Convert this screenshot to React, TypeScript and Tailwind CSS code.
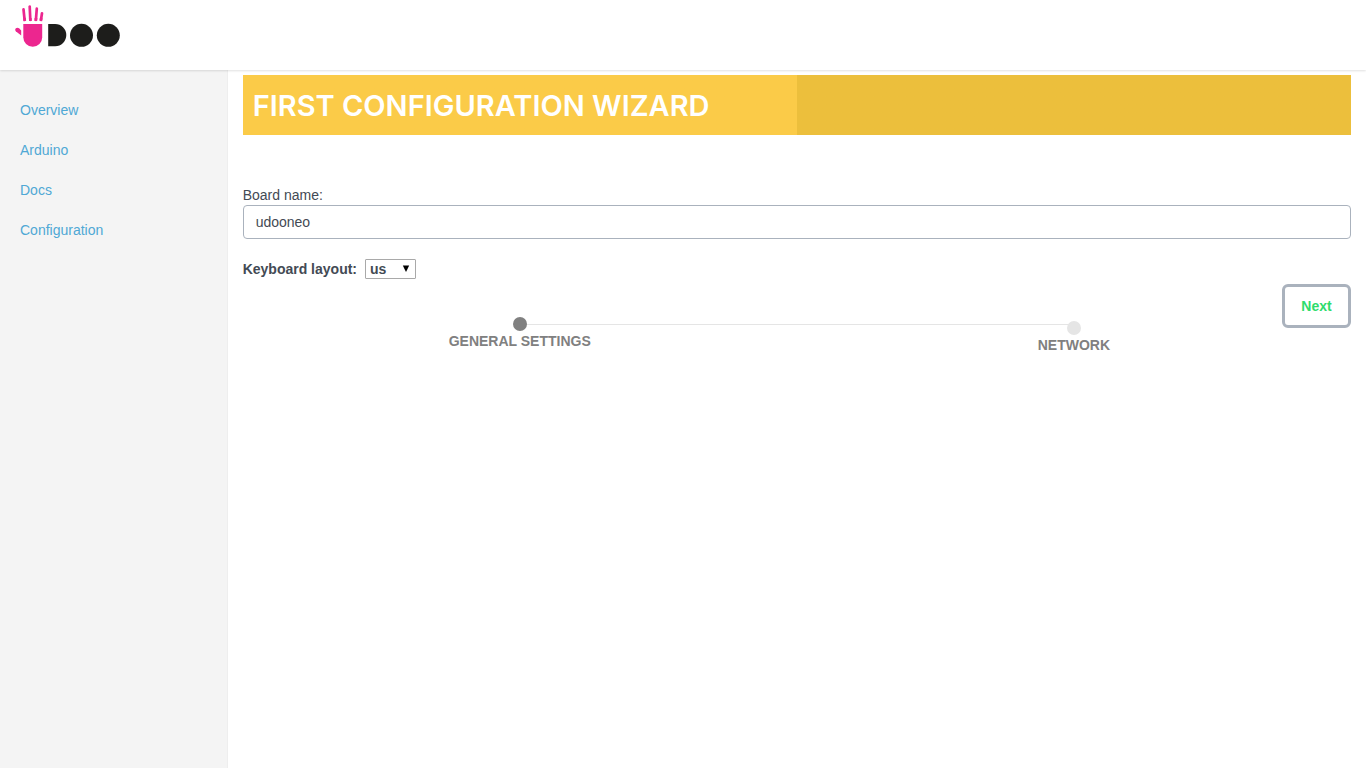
import React, { useState } from "react";

const links = ["Overview", "Arduino", "Docs", "Configuration"];

function Logo() {
  return (
    <svg width="106" height="44" viewBox="15 4 106 44" role="img" aria-label="UDOO">
      <g fill="#ec268f">
        <path d="M23.3 24H42.2V37.2A9.45 9.45 0 0 1 23.3 37.2Z" />
        <path d="M15.2 29.8C15.2 27.8 17.5 27 19.1 28.3L21.2 30.6V35.4L15.8 31.2Q15.2 30.7 15.2 29.8Z" />
      </g>
      <g stroke="#ec268f" strokeWidth="2.7" strokeLinecap="round">
        <path d="M23.5 9.3L24.6 19.8" />
        <path d="M29.7 6.5L30.3 19.8" />
        <path d="M36.8 8.7L35.9 19.8" />
        <path d="M42 13.3L41 19.8" />
      </g>
      <g stroke="#ec268f" strokeWidth="2.7">
        <path d="M24.5 18L24.8 21" />
        <path d="M30.3 18L30.4 21" />
        <path d="M36 18L35.8 21" />
        <path d="M41.2 18L40.8 21" />
      </g>
      <g fill="#1d1d1b">
        <path d="M48.2 24H55.2A11.1 11.1 0 0 1 55.2 46.2H48.2Z" />
        <circle cx="81.5" cy="35.3" r="11.5" />
        <circle cx="108.3" cy="35.3" r="11.5" />
      </g>
    </svg>
  );
}

export default function App() {
  const [name, setName] = useState("udooneo");

  return (
    <div className="flex min-h-screen flex-col bg-white font-['Liberation_Sans',Arial,sans-serif] text-sm leading-5 text-[#434a54]">
      <header className="relative h-[70px] px-[15px] pt-1 shadow-[0_1px_2px_rgba(0,0,0,0.12)]">
        <a href="#home" className="inline-block">
          <Logo />
        </a>
      </header>
      <div className="flex grow">
        <nav className="w-1/6 shrink-0 border-r border-[#eeeeee] bg-[#f4f4f4] pt-5">
          <ul>
            {links.map((link) => (
              <li key={link}>
                <a href={"#" + link.toLowerCase()} className="block px-5 py-2.5 text-[#4fa8d5]">
                  {link}
                </a>
              </li>
            ))}
          </ul>
        </nav>
        <main className="min-w-0 grow px-[15px] pt-[5px]">
          <div className="flex h-15 items-center bg-linear-to-r from-[#fbcb48] from-50% to-[#ecbf3c] to-50% px-2.5">
            <h1 className="pt-0.5 font-['Inter',sans-serif] text-[29px] leading-8 font-semibold text-white">
              FIRST CONFIGURATION WIZARD
            </h1>
          </div>
          <form onSubmit={(event) => event.preventDefault()}>
            <div className="pt-[50px]">
              <label htmlFor="board" className="block">
                Board name:
              </label>
              <input
                id="board"
                type="text"
                value={name}
                onChange={(event) => setName(event.target.value)}
                className="block h-[34px] w-full rounded border border-[#aab2bd] bg-white px-3 text-[#434a54] outline-none"
              />
            </div>
            <div className="mt-5 flex items-center gap-2 font-bold">
              <label htmlFor="keyboard">Keyboard layout:</label>
              <span className="relative inline-flex">
                <select
                  id="keyboard"
                  defaultValue="us"
                  className="h-5 w-[51px] appearance-none rounded-[1px] border border-[#a9a9a9] bg-white pl-1 leading-4 font-bold outline-none"
                >
                  <option>us</option>
                  <option>it</option>
                  <option>de</option>
                </select>
                <svg
                  className="pointer-events-none absolute top-1.5 right-1.5"
                  width="8"
                  height="7"
                  viewBox="0 0 8 7"
                  aria-hidden="true"
                >
                  <path d="M0.8 0.5H7.2L4 7Z" fill="#000" />
                </svg>
              </span>
            </div>
            <div className="mt-[5px] flex h-8 justify-end">
              <button
                type="submit"
                className="h-11 w-[69px] shrink-0 rounded-md border-3 border-[#aab2bd] bg-white font-bold text-[#2fdc6c]"
              >
                Next
              </button>
            </div>
          </form>
          <ol className="relative grid grid-cols-2 font-bold text-[#808080]">
            <li aria-hidden="true" className="absolute top-2 right-1/4 left-1/4 h-px bg-[#e5e5e5]" />
            <li className="relative flex flex-col items-center">
              <span className="mt-px size-3.5 rounded-full bg-[#808080]" />
              <span>GENERAL SETTINGS</span>
            </li>
            <li className="relative flex flex-col items-center pt-1">
              <span className="mt-px size-3.5 rounded-full bg-[#e5e5e5]" />
              <span>NETWORK</span>
            </li>
          </ol>
        </main>
      </div>
    </div>
  );
}
